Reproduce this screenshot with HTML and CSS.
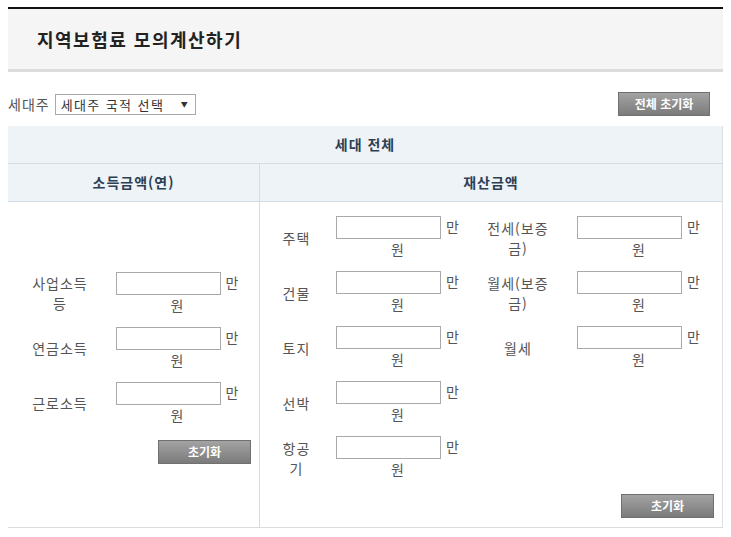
FILE: index.html
```html
<!DOCTYPE html>
<html lang="ko">
<head>
<meta charset="utf-8">
<title>지역보험료 모의계산하기</title>
<link rel="stylesheet" href="styles.css">
</head>
<body>
<div class="calc">
  <div class="title-bar"><h1 class="title">지역보험료 모의계산하기</h1></div>

  <div class="toolbar">
    <label class="owner">세대주
      <span class="select-wrap">
        <select class="select">
          <option>세대주 국적 선택</option>
          <option>내국인</option>
          <option>외국인</option>
        </select>
      </span>
    </label>
    <button class="btn btn-all" type="button">전체 초기화</button>
  </div>

  <div class="sheet">
    <div class="th th-all">세대 전체</div>
    <div class="cols">
      <section class="col col-income">
        <div class="th">소득금액(연)</div>
        <div class="col-body income-body">
          <div class="row row-income">
            <div class="lbl">사업소득 등</div>
            <div class="amt"><input class="inp" type="text"> 만원</div>
          </div>
          <div class="row row-income">
            <div class="lbl">연금소득</div>
            <div class="amt"><input class="inp" type="text"> 만원</div>
          </div>
          <div class="row row-income">
            <div class="lbl">근로소득</div>
            <div class="amt"><input class="inp" type="text"> 만원</div>
          </div>
          <div class="btn-row"><button class="btn btn-reset" type="button">초기화</button></div>
        </div>
      </section>

      <section class="col col-asset">
        <div class="th">재산금액</div>
        <div class="col-body asset-body">
          <div class="row row-asset">
            <div class="lbl lbl-a">주택</div>
            <div class="amt amt-a1"><input class="inp" type="text"> 만원</div>
            <div class="lbl lbl-b">전세(보증금)</div>
            <div class="amt amt-a2"><input class="inp" type="text"> 만원</div>
          </div>
          <div class="row row-asset">
            <div class="lbl lbl-a">건물</div>
            <div class="amt amt-a1"><input class="inp" type="text"> 만원</div>
            <div class="lbl lbl-b">월세(보증금)</div>
            <div class="amt amt-a2"><input class="inp" type="text"> 만원</div>
          </div>
          <div class="row row-asset">
            <div class="lbl lbl-a">토지</div>
            <div class="amt amt-a1"><input class="inp" type="text"> 만원</div>
            <div class="lbl lbl-b">월세</div>
            <div class="amt amt-a2"><input class="inp" type="text"> 만원</div>
          </div>
          <div class="row row-asset">
            <div class="lbl lbl-a">선박</div>
            <div class="amt amt-a1"><input class="inp" type="text"> 만원</div>
          </div>
          <div class="row row-asset">
            <div class="lbl lbl-a">항공기</div>
            <div class="amt amt-a1"><input class="inp" type="text"> 만원</div>
          </div>
          <div class="btn-row"><button class="btn btn-reset" type="button">초기화</button></div>
        </div>
      </section>
    </div>
  </div>
</div>
</body>
</html>
```

FILE: styles.css
```css
* { box-sizing: border-box; }

body {
  margin: 7px 8px 8px;
  background: #fff;
  font-family: "Noto Sans CJK KR", "Noto Sans", sans-serif;
  font-size: 14px;
  letter-spacing: 1px;
  color: #555;
}

.calc { width: 715px; }

.title-bar {
  border-top: 2px solid #111;
  border-bottom: 3px solid #dcdcdc;
  background: #f5f5f5;
  height: 65px;
  display: flex;
  align-items: center;
  padding-left: 29px;
}

.title {
  margin: 0;
  font-size: 18px;
  font-weight: bold;
  letter-spacing: 1.5px;
  color: #222;
  line-height: 24px;
  padding-bottom: 1px;
}

.toolbar {
  display: flex;
  align-items: center;
  justify-content: space-between;
  height: 24px;
  margin: 20px 13px 10px 0;
}

.owner {
  display: flex;
  align-items: center;
  gap: 5px;
  font-size: 14px;
  color: #555;
  line-height: 20px;
}

.select-wrap { position: relative; display: inline-block; }
.select-wrap::after {
  content: "▼";
  position: absolute;
  right: 7px;
  top: 6px;
  font-size: 7px;
  line-height: 9px;
  color: #333;
  pointer-events: none;
}

.select {
  -webkit-appearance: none;
  appearance: none;
  width: 141px;
  height: 21px;
  border: 1px solid #a9a9a9;
  border-radius: 0;
  background: #fff;
  padding: 0 0 0 5px;
  font-family: inherit;
  font-size: 13px;
  letter-spacing: 1.4px;
  line-height: 19px;
  color: #333;
}

.btn {
  height: 24px;
  border: 1px solid #707070;
  background: linear-gradient(#a3a3a3, #7b7b7b);
  color: #fff;
  font-family: inherit;
  font-size: 12px;
  font-weight: bold;
  letter-spacing: 0;
  line-height: 22px;
  padding: 0;
  border-radius: 0;
}
.btn-all { width: 92px; }
.btn-reset { width: 93px; }

.sheet {
  border-right: 1px solid #dde1e6;
  border-bottom: 1px solid #d8dce1;
}

.th {
  height: 38px;
  background: #eef3f8;
  border-bottom: 1px solid #d3dbe4;
  display: flex;
  align-items: center;
  justify-content: center;
  font-size: 14px;
  font-weight: bold;
  color: #2d4053;
  padding-bottom: 1px;
}

.cols {
  display: grid;
  grid-template-columns: 252px 1fr;
}

.col-income { border-right: 1px solid #d6dce2; }

.col-body { height: 325px; padding-right: 8px; }

.income-body {
  display: flex;
  flex-direction: column;
  justify-content: center;
}

.asset-body { padding-top: 8px; }

.row {
  display: grid;
  height: 55px;
  align-items: center;
}
.row-income { grid-template-columns: 104px 131px; }
.row-asset { grid-template-columns: 73px 130px 110px 132px; }

.lbl {
  text-align: center;
  line-height: 20px;
  padding: 0 19px;
  color: #555;
}
.lbl-a { padding: 0 16px; }
.lbl-b { padding: 0 20px; }

.amt {
  text-align: center;
  line-height: 20px;
  color: #555;
}

.inp {
  width: 105px;
  height: 23px;
  border: 1px solid #a9a9a9;
  border-radius: 0;
  background: #fff;
  vertical-align: top;
  margin: 0;
  padding: 0 3px;
  font-family: inherit;
  font-size: 13px;
}

.btn-row {
  display: flex;
  justify-content: flex-end;
  margin-top: 9px;
}
```
